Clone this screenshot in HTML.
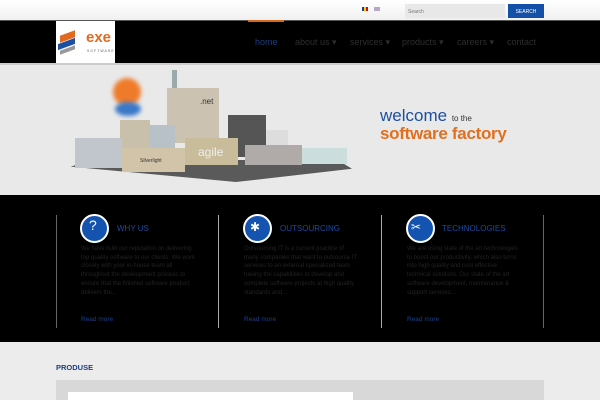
<!DOCTYPE html>
<html><head><meta charset="utf-8"><style>
*{margin:0;padding:0;box-sizing:border-box}
body{width:600px;height:400px;overflow:hidden;background:#ececec;font-family:"Liberation Sans",sans-serif;position:relative}
.a{position:absolute}
.nav span{position:absolute;top:37px;font-size:9px;color:#2e2e2e}
.col h3{position:absolute;font-size:8px;color:#1a4aa0;font-weight:normal}
.col p{position:absolute;font-size:6px;line-height:8.7px;color:#222;width:115px}
.col a{position:absolute;font-size:6.5px;color:#1a3f8a}
.ic{position:absolute;width:29px;height:29px;border-radius:50%;background:#1553b0;border:2px solid #fff}
</style></head><body>
<div class="a" style="left:0;top:0;width:600px;height:20px;background:linear-gradient(#fff,#f0f0f0)"></div>
<div class="a" style="left:362px;top:7px;width:6px;height:4px;background:linear-gradient(90deg,#1a3fa0 33%,#f5d000 33%,#f5d000 66%,#d01010 66%)"></div>
<div class="a" style="left:374px;top:7px;width:6px;height:4px;background:#b8a8c8"></div>
<div class="a" style="left:405px;top:4px;width:100px;height:14px;background:#e8e8e8;font-size:5px;color:#777;padding:5px 3px">Search</div>
<div class="a" style="left:508px;top:4px;width:36px;height:14px;background:#1550a8;font-size:5px;color:#fff;text-align:center;padding-top:5px">SEARCH</div>
<div class="a" style="left:0;top:20px;width:600px;height:43px;background:#000;border-top:1px solid #555"></div>
<div class="a" style="left:248px;top:20px;width:36px;height:2px;background:#d86a20"></div>
<div class="a" style="left:56px;top:21px;width:59px;height:42px;background:#fff;overflow:hidden">
<div class="a" style="left:4px;top:12px;width:15px;height:7px;background:#e06a20;transform:skewY(-20deg)"></div>
<div class="a" style="left:2px;top:20px;width:17px;height:6px;background:#1c4fa0;transform:skewY(-20deg)"></div>
<div class="a" style="left:4px;top:27px;width:15px;height:4px;background:#999;transform:skewY(-20deg)"></div>
<div class="a" style="left:30px;top:8px;font-size:15px;font-weight:bold;color:#e06a20">exe</div>
<div class="a" style="left:31px;top:28px;font-size:3.5px;color:#666;letter-spacing:1px">SOFTWARE</div>
</div>
<div class="nav">
<span style="left:255px;color:#1c3e80">home</span>
<span style="left:295px">about us ▾</span>
<span style="left:350px">services ▾</span>
<span style="left:402px">products ▾</span>
<span style="left:457px">careers ▾</span>
<span style="left:507px">contact</span>
</div>
<div class="a" style="left:0;top:63px;width:600px;height:132px;background:#e9e9e9;border-top:2px solid #ccc"></div>
<div class="a" style="left:62px;top:160px;width:290px;height:22px;background:#5a5a5a;clip-path:polygon(3% 30%,60% 100%,100% 40%,95% 0,10% 0)"></div>
<div class="a" style="left:172px;top:70px;width:5px;height:25px;background:#9aa"></div>
<div class="a" style="left:167px;top:88px;width:52px;height:55px;background:#cbc2b2"></div>
<div class="a" style="left:200px;top:97px;font-size:8px;color:#333">.net</div>
<div class="a" style="left:228px;top:115px;width:38px;height:42px;background:#555"></div>
<div class="a" style="left:266px;top:130px;width:22px;height:28px;background:#ddd"></div>
<div class="a" style="left:113px;top:78px;width:28px;height:28px;border-radius:50%;background:#ef7b2a;filter:blur(2px)"></div>
<div class="a" style="left:115px;top:102px;width:26px;height:14px;border-radius:50%;background:#3a78c8;filter:blur(2px)"></div>
<div class="a" style="left:120px;top:120px;width:30px;height:40px;background:#c8c0aa"></div>
<div class="a" style="left:150px;top:125px;width:25px;height:35px;background:#b8c0c8"></div>
<div class="a" style="left:75px;top:138px;width:47px;height:30px;background:#c0c6cc"></div>
<div class="a" style="left:122px;top:148px;width:63px;height:24px;background:#d2c4a8"></div>
<div class="a" style="left:140px;top:158px;font-size:5px;color:#333">Silverlight</div>
<div class="a" style="left:185px;top:138px;width:53px;height:27px;background:#c8bc9a"></div>
<div class="a" style="left:198px;top:145px;font-size:12px;color:#eee">agile</div>
<div class="a" style="left:245px;top:145px;width:57px;height:20px;background:#b0aaa8"></div>
<div class="a" style="left:302px;top:148px;width:45px;height:16px;background:#cdd"></div>
<div class="a" style="left:380px;top:106px;font-size:17px;color:#1c4fa0">welcome <span style="font-size:8px;color:#333">to the</span></div>
<div class="a" style="left:380px;top:124px;font-size:17px;color:#e07020;font-weight:bold;letter-spacing:-0.3px">software factory</div>
<div class="a" style="left:0;top:195px;width:600px;height:147px;background:#000"></div>
<div class="a" style="left:56px;top:215px;width:1px;height:113px;background:#666"></div>
<div class="a" style="left:218px;top:215px;width:1px;height:113px;background:#aaa"></div>
<div class="a" style="left:381px;top:215px;width:1px;height:113px;background:#aaa"></div>
<div class="a" style="left:543px;top:215px;width:1px;height:113px;background:#666"></div>
<div class="col">
<div class="ic" style="left:80px;top:214px"></div><div class="a" style="left:89px;top:217px;color:#fff;font-size:14px">?</div>
<h3 style="left:117px;top:224px">WHY US</h3>
<p style="left:81px;top:245px">We have built our reputation on delivering top quality software to our clients. We work closely with your in-house team all throughout the development process to ensure that the finished software product delivers the...</p>
<a style="left:81px;top:316px">Read more</a>
<div class="ic" style="left:243px;top:214px"></div><div class="a" style="left:250px;top:220px;color:#fff;font-size:12px">✱</div>
<h3 style="left:280px;top:224px">OUTSOURCING</h3>
<p style="left:244px;top:245px">Outsourcing IT is a current practice of many companies that want to outsource IT services to an external specialized team having the capabilities to develop and complete software projects at high quality standards and...</p>
<a style="left:244px;top:316px">Read more</a>
<div class="ic" style="left:406px;top:214px"></div><div class="a" style="left:411px;top:220px;color:#fff;font-size:12px">✂</div>
<h3 style="left:442px;top:224px">TECHNOLOGIES</h3>
<p style="left:407px;top:245px">We are using state of the art technologies to boost our productivity, which also turns into high quality and cost effective technical solutions. Our state of the art software development, maintenance &amp; support services...</p>
<a style="left:407px;top:316px">Read more</a>
</div>
<div class="a" style="left:56px;top:363px;font-size:7.5px;color:#1c3e80;font-weight:bold">PRODUSE</div>
<div class="a" style="left:56px;top:380px;width:488px;height:20px;background:#d8d8d8"></div>
<div class="a" style="left:68px;top:392px;width:285px;height:8px;background:#fff"></div>
</body></html>
